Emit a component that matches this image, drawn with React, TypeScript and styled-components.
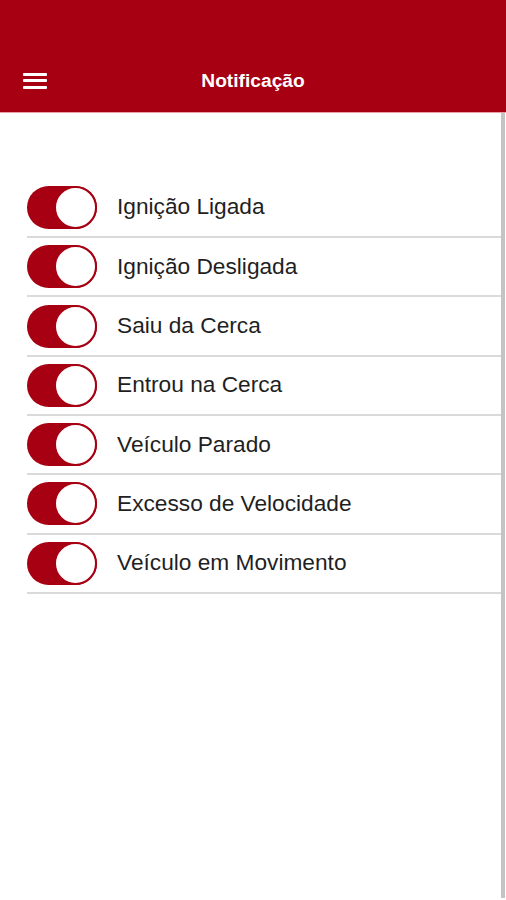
import React from "react";
import styled, { createGlobalStyle } from "styled-components";

const GlobalStyle = createGlobalStyle`
  html, body { margin: 0; padding: 0; background: #ffffff; }
  body { font-family: "Liberation Sans", Arial, sans-serif; }
  * { box-sizing: border-box; }
`;

const Page = styled.div`
  width: 506px;
  height: 900px;
  display: flex;
  flex-direction: column;
  overflow: hidden;
  background: #ffffff;
`;

const Header = styled.header`
  height: 113px;
  background: #a60012;
  padding-top: 48px;
  border-bottom: 1px solid #e8a0a6;
`;

const Toolbar = styled.div`
  height: 64px;
  display: grid;
  grid-template-columns: 60px 1fr 60px;
  align-items: center;
`;

const MenuButton = styled.button`
  background: none;
  border: none;
  padding: 1px 0 0 23px;
  height: 100%;
  display: flex;
  flex-direction: column;
  justify-content: center;
  gap: 3.5px;
  cursor: pointer;
`;

const MenuLine = styled.span`
  display: block;
  width: 24px;
  height: 3px;
  border-radius: 1px;
  background: #ffffff;
`;

const Title = styled.h1`
  margin: 0;
  text-align: center;
  color: #ffffff;
  font-family: "Liberation Sans", Arial, sans-serif;
  font-weight: 700;
  font-size: 19.2px;
  padding-top: 2px;
`;

const Content = styled.main`
  flex: 1;
  display: flex;
  min-height: 0;
`;

const List = styled.ul`
  flex: 1;
  list-style: none;
  margin: 0;
  padding: 65.7px 0 0 27px;
`;

const Row = styled.li`
  height: 59.33px;
  display: flex;
  align-items: center;
  gap: 20px;
  border-bottom: 2px solid #dadada;
`;

const Switch = styled.span<{ $on: boolean }>`
  position: relative;
  flex: none;
  width: 70px;
  height: 43px;
  border-radius: 22px;
  background: ${(p) => (p.$on ? "#a60012" : "#cccccc")};
`;

const Knob = styled.span<{ $on: boolean }>`
  position: absolute;
  top: 0;
  ${(p) => (p.$on ? "right: 0;" : "left: 0;")}
  width: 43px;
  height: 43px;
  border-radius: 50%;
  background: #ffffff;
  border: 2.5px solid ${(p) => (p.$on ? "#a60012" : "#cccccc")};
`;

const Label = styled.span`
  font-family: "Liberation Sans", Arial, sans-serif;
  font-size: 22.7px;
  color: #1f1f1f;
  padding-bottom: 1px;
`;

const Scrollbar = styled.div`
  width: 4px;
  margin: 0 1px 2px 0;
  background: #c4c4c4;
`;

const items = [
  "Ignição Ligada",
  "Ignição Desligada",
  "Saiu da Cerca",
  "Entrou na Cerca",
  "Veículo Parado",
  "Excesso de Velocidade",
  "Veículo em Movimento",
];

export default function App() {
  return (
    <Page>
      <GlobalStyle />
      <Header>
        <Toolbar>
          <MenuButton aria-label="Menu">
            <MenuLine />
            <MenuLine />
            <MenuLine />
          </MenuButton>
          <Title>Notificação</Title>
          <span />
        </Toolbar>
      </Header>
      <Content>
        <List>
          {items.map((label) => (
            <Row key={label}>
              <Switch $on={true}>
                <Knob $on={true} />
              </Switch>
              <Label>{label}</Label>
            </Row>
          ))}
        </List>
        <Scrollbar />
      </Content>
    </Page>
  );
}
